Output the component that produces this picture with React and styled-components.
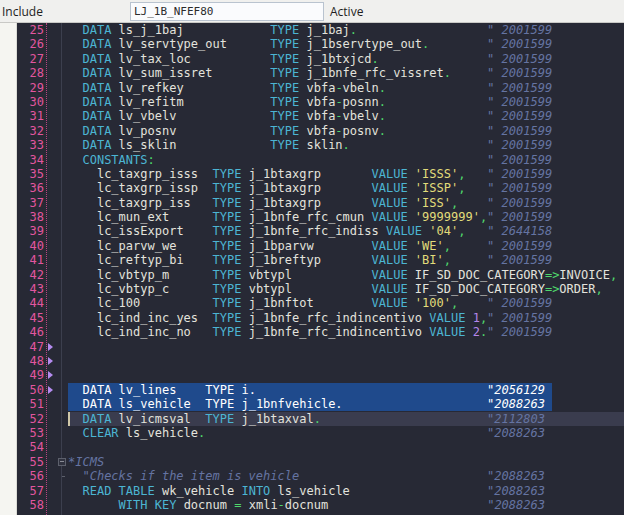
import React from 'react';
import styled, { createGlobalStyle, css } from 'styled-components';

const GlobalStyle = createGlobalStyle`
  html, body { margin: 0; padding: 0; background: #272935; }
  body { overflow: hidden; }
`;

const KW = new Set(['DATA', 'TYPE', 'VALUE', 'CONSTANTS', 'CLEAR', 'READ', 'TABLE', 'INTO', 'WITH', 'KEY']);

// each line: list of [column, text]
const lines = [
  [25, [[2, 'DATA ls_j_1baj'], [28, 'TYPE j_1baj.'], [58, '" 2001599']]],
  [26, [[2, 'DATA lv_servtype_out'], [28, 'TYPE j_1bservtype_out.'], [58, '" 2001599']]],
  [27, [[2, 'DATA lv_tax_loc'], [28, 'TYPE j_1btxjcd.'], [58, '" 2001599']]],
  [28, [[2, 'DATA lv_sum_issret'], [28, 'TYPE j_1bnfe_rfc_vissret.'], [58, '" 2001599']]],
  [29, [[2, 'DATA lv_refkey'], [28, 'TYPE vbfa-vbeln.'], [58, '" 2001599']]],
  [30, [[2, 'DATA lv_refitm'], [28, 'TYPE vbfa-posnn.'], [58, '" 2001599']]],
  [31, [[2, 'DATA lv_vbelv'], [28, 'TYPE vbfa-vbelv.'], [58, '" 2001599']]],
  [32, [[2, 'DATA lv_posnv'], [28, 'TYPE vbfa-posnv.'], [58, '" 2001599']]],
  [33, [[2, 'DATA ls_sklin'], [28, 'TYPE sklin.'], [58, '" 2001599']]],
  [34, [[2, 'CONSTANTS:'], [58, '" 2001599']]],
  [35, [[4, 'lc_taxgrp_isss'], [20, 'TYPE j_1btaxgrp'], [42, "VALUE 'ISSS',"], [58, '" 2001599']]],
  [36, [[4, 'lc_taxgrp_issp'], [20, 'TYPE j_1btaxgrp'], [42, "VALUE 'ISSP',"], [58, '" 2001599']]],
  [37, [[4, 'lc_taxgrp_iss'], [20, 'TYPE j_1btaxgrp'], [42, "VALUE 'ISS',"], [58, '" 2001599']]],
  [38, [[4, 'lc_mun_ext'], [20, "TYPE j_1bnfe_rfc_cmun VALUE '9999999',"], [58, '" 2001599']]],
  [39, [[4, 'lc_issExport'], [20, "TYPE j_1bnfe_rfc_indiss VALUE '04',"], [58, '" 2644158']]],
  [40, [[4, 'lc_parvw_we'], [20, 'TYPE j_1bparvw'], [42, "VALUE 'WE',"], [58, '" 2001599']]],
  [41, [[4, 'lc_reftyp_bi'], [20, 'TYPE j_1breftyp'], [42, "VALUE 'BI',"], [58, '" 2001599']]],
  [42, [[4, 'lc_vbtyp_m'], [20, 'TYPE vbtypl'], [42, 'VALUE IF_SD_DOC_CATEGORY=>INVOICE,']]],
  [43, [[4, 'lc_vbtyp_c'], [20, 'TYPE vbtypl'], [42, 'VALUE IF_SD_DOC_CATEGORY=>ORDER,']]],
  [44, [[4, 'lc_100'], [20, 'TYPE j_1bnftot'], [42, "VALUE '100',"], [58, '" 2001599']]],
  [45, [[4, 'lc_ind_inc_yes'], [20, 'TYPE j_1bnfe_rfc_indincentivo VALUE 1,'], [58, '" 2001599']]],
  [46, [[4, 'lc_ind_inc_no'], [20, 'TYPE j_1bnfe_rfc_indincentivo VALUE 2.'], [58, '" 2001599']]],
  [47, [], { marker: true }],
  [48, [], { marker: true }],
  [49, [], { marker: true }],
  [50, [[2, 'DATA lv_lines'], [19, 'TYPE i.'], [58, '"2056129']], { marker: true, selected: true }],
  [51, [[2, 'DATA ls_vehicle'], [19, 'TYPE j_1bnfvehicle.'], [58, '"2088263']], { selected: true }],
  [52, [[2, 'DATA lv_icmsval'], [19, 'TYPE j_1btaxval.'], [58, '"2112803']], { current: true }],
  [53, [[2, 'CLEAR ls_vehicle.'], [58, '"2088263']]],
  [54, []],
  [55, [[0, '*ICMS']], { fold: true }],
  [56, [[2, '"Checks if the item is vehicle'], [58, '"2088263']], { tick: true }],
  [57, [[2, 'READ TABLE wk_vehicle INTO ls_vehicle'], [58, '"2088263']]],
  [58, [[7, 'WITH KEY docnum = xmli-docnum'], [58, '"2088263']]],
];

const build = (segs) =>
  segs.reduce((out, [col, text]) => out.padEnd(col, ' ') + text, '');

const tokenize = (text) => {
  const re = /("[^]*$)|(^\*.*$)|('[^']*')|(=>|[.,:=-])|([A-Za-z_][A-Za-z0-9_]*)|(\d+)|(\s+)|(.)/g;
  const out = [];
  let m;
  while ((m = re.exec(text))) {
    let kind = 'plain';
    if (m[1] || m[2]) kind = 'comment';
    else if (m[3]) kind = 'string';
    else if (m[4]) kind = 'punct';
    else if (m[5]) kind = KW.has(m[5]) ? 'kw' : 'plain';
    else if (m[6]) kind = 'number';
    out.push({ text: m[0], kind });
  }
  return out;
};

const colors = {
  plain: '#e3e3dd',
  kw: '#4cb5d3',
  punct: '#4fd86c',
  string: '#e2dc7a',
  comment: '#6574a2',
  number: '#b487ea',
};

const Page = styled.div`
  width: 100vw;
  height: 100vh;
  display: flex;
  flex-direction: column;
  overflow: hidden;
`;

const Header = styled.div`
  height: 22px;
  flex: none;
  display: flex;
  align-items: center;
  background: #f0f0ee;
  border-bottom: 1px solid #c9c9c6;
  font-family: "Open Sans", "Noto Sans", sans-serif;
  font-size: 12px;
  color: #1e1e1e;
`;

const Label = styled.span`
  width: 128px;
  padding-left: 2px;
`;

const Field = styled.div`
  width: 189px;
  height: 17px;
  margin-top: 1px;
  padding-left: 3px;
  display: flex;
  align-items: center;
  border: 1px solid #b9c3cf;
  background: #fafbfd;
  font-family: "DejaVu Sans Mono", monospace;
  font-size: 11px;
  color: #2c2c2c;
`;

const Status = styled.span`
  margin-left: 6px;
`;

const Editor = styled.div`
  flex: 1;
  display: flex;
  background: #272935;
  font-family: "DejaVu Sans Mono", monospace;
  font-size: 12px;
  line-height: 14.4px;
  overflow: hidden;
`;

const Strip = styled.div`
  width: 17px;
  flex: none;
  background: #f5f5f1;
  border-right: 1px solid #dcdcd6;
  box-sizing: border-box;
`;

const Numbers = styled.div`
  width: 30px;
  flex: none;
  border-right: 1px dotted #b8457f;
  color: #e2569f;
  text-align: right;
  padding-right: 2px;
  box-sizing: border-box;
`;

const Markers = styled.div`
  width: 15px;
  flex: none;
  border-right: 1px solid #3c3f4e;
  box-sizing: border-box;
`;

const FoldGap = styled.div`
  width: 6px;
  flex: none;
`;

const Cell = styled.div`
  height: 14.4px;
  position: relative;
`;

const Triangle = styled.div`
  position: absolute;
  left: 1px;
  top: 3px;
  width: 0;
  height: 0;
  border-top: 4px solid transparent;
  border-bottom: 4px solid transparent;
  border-left: 5px solid #b58cf0;
`;

const FoldBox = styled.div`
  position: absolute;
  left: -4px;
  top: 3px;
  width: 8px;
  height: 8px;
  box-sizing: border-box;
  border: 1px solid #5d606c;
  background: #30323f;
  &::after {
    content: '';
    position: absolute;
    left: 1px;
    right: 1px;
    top: 2.5px;
    height: 1px;
    background: #8a8c96;
  }
`;

const Tick = styled.div`
  position: absolute;
  left: 0;
  top: 7px;
  width: 3px;
  height: 1px;
  background: #5d606c;
`;

const Code = styled.div`
  flex: 1;
  min-width: 0;
`;

const Row = styled.div`
  height: 14.4px;
  white-space: pre;
  position: relative;
  ${(p) =>
    p.$current &&
    css`
      background: #3a3c4e;
      &::before {
        content: '';
        position: absolute;
        left: 0;
        top: 0;
        bottom: 0;
        width: 2px;
        background: #cfc7a8;
      }
    `}
`;

const Sel = styled.span`
  background: #1f4a8c;
`;

const Tok = styled.span`
  color: ${(p) => (p.$selected ? '#ffffff' : colors[p.$kind])};
  font-style: ${(p) => (p.$kind === 'comment' ? 'italic' : 'normal')};
`;

const renderTokens = (text, selected) =>
  tokenize(text).map((t, i) => (
    <Tok key={i} $kind={t.kind} $selected={selected}>
      {t.text}
    </Tok>
  ));

const App = () => {
  return (
    <>
      <GlobalStyle />
      <Page>
        <Header>
          <Label>Include</Label>
          <Field>LJ_1B_NFEF80</Field>
          <Status>Active</Status>
        </Header>
        <Editor>
          <Strip />
          <Numbers>
            {lines.map(([n]) => (
              <Cell key={n}>{n}</Cell>
            ))}
          </Numbers>
          <Markers>
            {lines.map(([n, , opt = {}]) => (
              <Cell key={n}>{opt.marker && <Triangle />}</Cell>
            ))}
          </Markers>
          <FoldGap>
            {lines.map(([n, , opt = {}]) => (
              <Cell key={n}>
                {opt.fold && <FoldBox />}
                {opt.tick && <Tick />}
              </Cell>
            ))}
          </FoldGap>
          <Code>
            {lines.map(([n, segs, opt = {}]) => {
              const text = build(segs);
              return (
                <Row key={n} $current={opt.current}>
                  {opt.selected ? (
                    <Sel>{renderTokens(text + ' ', true)}</Sel>
                  ) : (
                    renderTokens(text, false)
                  )}
                </Row>
              );
            })}
          </Code>
        </Editor>
      </Page>
    </>
  );
};

export default App;
